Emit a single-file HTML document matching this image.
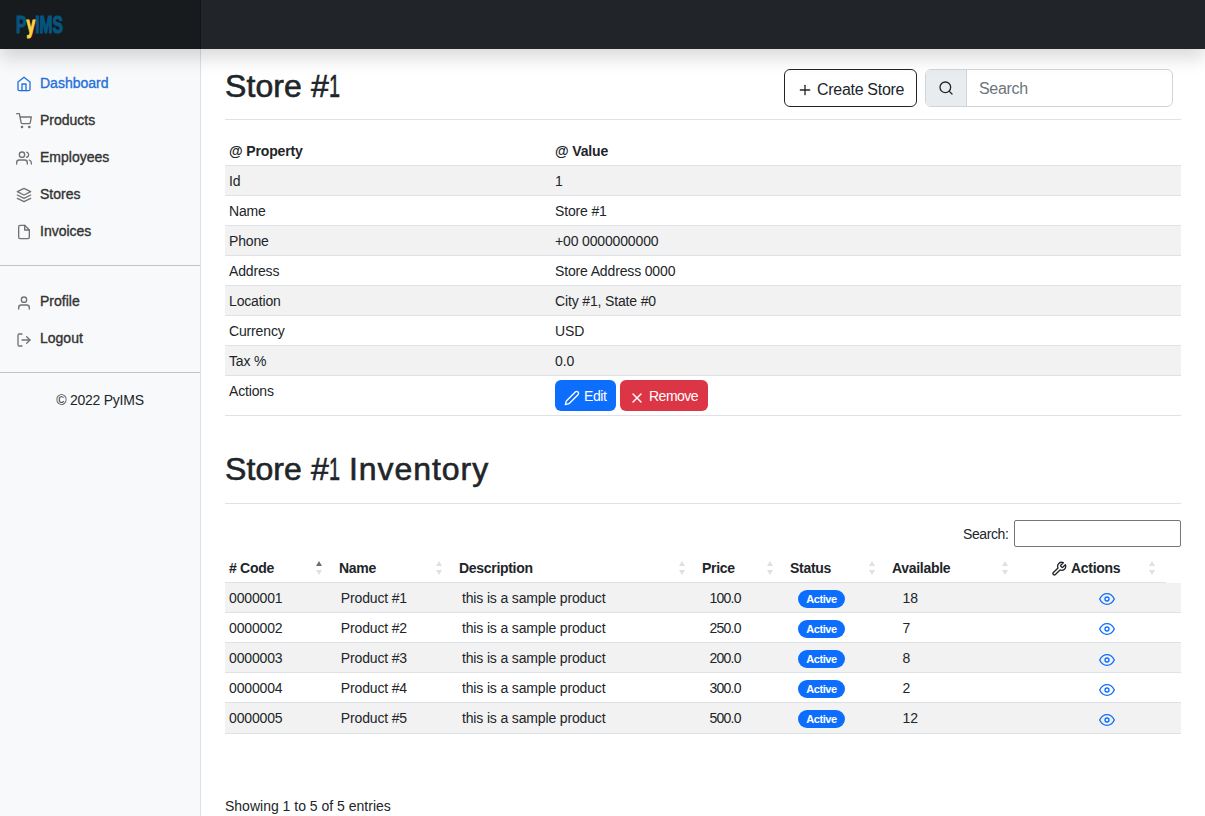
<!DOCTYPE html>
<html>
<head>
<meta charset="utf-8">
<style>
*{box-sizing:border-box;}
html,body{margin:0;padding:0;}
body{width:1205px;height:816px;overflow:hidden;position:relative;background:#fff;color:#212529;font-family:"Liberation Sans",sans-serif;font-size:14px;line-height:21px;}
.abs{position:absolute;white-space:nowrap;}
svg.fi{position:absolute;width:16px;height:16px;fill:none;stroke:currentColor;stroke-width:2;stroke-linecap:round;stroke-linejoin:round;}
#nav{position:absolute;left:0;top:0;width:1205px;height:49px;background:#212529;box-shadow:0 9px 18px rgba(0,0,0,.15);z-index:20;}
#brand{position:absolute;left:0;top:0;width:200.83px;height:49px;background:rgba(0,0,0,.25);box-shadow:inset -1px 0 0 rgba(0,0,0,.25);}
#logo{position:absolute;left:16px;top:10.7px;font-weight:bold;font-size:23.5px;line-height:28px;color:#04557f;transform-origin:0 0;transform:scaleX(0.665);white-space:nowrap;letter-spacing:0px;-webkit-text-stroke:1.2px #04557f;}
#logo .y{color:#ffd140;-webkit-text-stroke:1.2px #ffd140;}
#side{position:absolute;left:0;top:48px;width:200.83px;height:768px;background:#f8f9fa;box-shadow:inset -1px 0 0 rgba(0,0,0,.1);z-index:10;}
#sidec{position:absolute;left:0;top:0;z-index:11;}
.nl{position:absolute;left:40px;height:21px;color:#333;white-space:nowrap;-webkit-text-stroke:0.35px #333;}
.nl.active{color:#2470dc;-webkit-text-stroke:0.35px #2470dc;}
.ic{color:#727272;}
.ic.active{color:#2470dc;}
.shr{position:absolute;left:0;width:200px;height:1px;background:#c2c3c5;}
.h2{position:absolute;left:225px;font-size:32px;line-height:38px;white-space:nowrap;-webkit-text-stroke:0.6px #212529;}
.one{display:inline-block;transform:scaleX(0.62);transform-origin:0 50%;margin-right:-6.8px;}
.hr{position:absolute;left:225px;width:956px;height:1px;background:#dee2e6;}
.btn-out{position:absolute;left:784px;top:69px;width:133px;height:38px;border:1px solid #212529;border-radius:6px;background:#fff;}
.ig{position:absolute;left:925px;top:69px;width:248px;height:38px;border:1px solid #ced4da;border-radius:6px;background:#fff;overflow:hidden;}
.ig .addon{position:absolute;left:0;top:0;width:41px;height:36px;background:#e9ecef;border-right:1px solid #ced4da;}
table{border-collapse:collapse;border-spacing:0;position:absolute;left:225px;table-layout:fixed;}
td,th{padding:5px 4px 3px 4px;border-bottom:1px solid #dee2e6;text-align:left;vertical-align:top;white-space:nowrap;height:29px;letter-spacing:-0.15px;}
th{font-weight:bold;}
tr.s td{background:#f2f2f2;}
#lastr td{height:31px;}
.btn-sm{display:block;height:31px;border-radius:6px;color:#fff;}
.badge{display:inline-block;height:18px;border-radius:9px;background:#0d6efd;color:#fff;font-weight:bold;font-size:11px;line-height:18px;text-align:center;letter-spacing:-0.4px;}
</style>
</head>
<body>
<div id="nav"><div id="brand"><div id="logo">P<span class="y">y</span>IMS</div></div></div>
<div id="side"></div>
<div id="sidec"><svg class="fi ic active" viewBox="0 0 24 24" style="left:16px;top:76px;"><path d="M3 9l9-7 9 7v11a2 2 0 0 1-2 2H5a2 2 0 0 1-2-2z"/><polyline points="9 22 9 12 15 12 15 22"/></svg><div class="nl active" style="top:72.5px">Dashboard</div><svg class="fi ic" viewBox="0 0 24 24" style="left:16px;top:113px;"><circle cx="9" cy="21" r="1"/><circle cx="20" cy="21" r="1"/><path d="M1 1h4l2.68 13.39a2 2 0 0 0 2 1.61h9.72a2 2 0 0 0 2-1.61L23 6H6"/></svg><div class="nl" style="top:109.5px">Products</div><svg class="fi ic" viewBox="0 0 24 24" style="left:16px;top:150px;"><path d="M17 21v-2a4 4 0 0 0-4-4H5a4 4 0 0 0-4 4v2"/><circle cx="9" cy="7" r="4"/><path d="M23 21v-2a4 4 0 0 0-3-3.87"/><path d="M16 3.13a4 4 0 0 1 0 7.75"/></svg><div class="nl" style="top:146.5px">Employees</div><svg class="fi ic" viewBox="0 0 24 24" style="left:16px;top:187px;"><polygon points="12 2 2 7 12 12 22 7 12 2"/><polyline points="2 17 12 22 22 17"/><polyline points="2 12 12 17 22 12"/></svg><div class="nl" style="top:183.5px">Stores</div><svg class="fi ic" viewBox="0 0 24 24" style="left:16px;top:224px;"><path d="M13 2H6a2 2 0 0 0-2 2v16a2 2 0 0 0 2 2h12a2 2 0 0 0 2-2V9z"/><polyline points="13 2 13 9 20 9"/></svg><div class="nl" style="top:220.5px">Invoices</div><div class="shr" style="top:265px"></div><svg class="fi ic" viewBox="0 0 24 24" style="left:16px;top:295px;"><path d="M20 21v-2a4 4 0 0 0-4-4H8a4 4 0 0 0-4 4v2"/><circle cx="12" cy="7" r="4"/></svg><div class="nl" style="top:291px">Profile</div><svg class="fi ic" viewBox="0 0 24 24" style="left:16px;top:332px;"><path d="M9 21H5a2 2 0 0 1-2-2V5a2 2 0 0 1 2-2h4"/><polyline points="16 17 21 12 16 7"/><line x1="21" y1="12" x2="9" y2="12"/></svg><div class="nl" style="top:328px">Logout</div><div class="shr" style="top:372px"></div><div class="abs" style="left:0;top:389.5px;width:200px;text-align:center;letter-spacing:-0.25px">© 2022 PyIMS</div></div>
<div id="mainc"><div class="h2" style="top:67px;letter-spacing:0.1px">Store #<span class="one">1</span></div><div class="btn-out"></div><svg class="fi " viewBox="0 0 24 24" style="left:797px;top:82px;color:#212529;"><line x1="12" y1="5" x2="12" y2="19"/><line x1="5" y1="12" x2="19" y2="12"/></svg><div class="abs" style="left:817px;top:77.5px;font-size:16px;line-height:24px;letter-spacing:-0.3px">Create Store</div><div class="ig"><div class="addon"></div></div><svg class="fi " viewBox="0 0 24 24" style="left:938px;top:80px;color:#212529;"><circle cx="11" cy="11" r="8"/><line x1="21" y1="21" x2="16.65" y2="16.65"/></svg><div class="abs" style="left:979px;top:77px;font-size:16px;line-height:24px;color:#6c757d;letter-spacing:-0.3px">Search</div><div class="hr" style="top:119px"></div><table style="top:136px;width:956px"><colgroup><col style="width:326px"><col style="width:630px"></colgroup><tr><th>@ Property</th><th>@ Value</th></tr><tr class="s"><td>Id</td><td>1</td></tr><tr class=""><td>Name</td><td>Store #1</td></tr><tr class="s"><td>Phone</td><td>+00 0000000000</td></tr><tr class=""><td>Address</td><td>Store Address 0000</td></tr><tr class="s"><td>Location</td><td>City #1, State #0</td></tr><tr class=""><td>Currency</td><td>USD</td></tr><tr class="s"><td>Tax %</td><td>0.0</td></tr><tr><td style="height:40px">Actions</td><td style="height:40px"></td></tr></table><div class="btn-sm abs" style="left:555px;top:380px;width:61px;background:#0d6efd"></div><svg class="fi " viewBox="0 0 24 24" style="left:564px;top:390px;color:#fff;"><path d="M17 3a2.828 2.828 0 1 1 4 4L7.5 20.5 2 22l1.5-5.5L17 3z"/></svg><div class="abs" style="left:584px;top:385.5px;color:#fff;letter-spacing:-0.4px">Edit</div><div class="btn-sm abs" style="left:620px;top:380px;width:88px;background:#dc3545"></div><svg class="fi " viewBox="0 0 24 24" style="left:629px;top:390px;color:#fff;"><line x1="18" y1="6" x2="6" y2="18"/><line x1="6" y1="6" x2="18" y2="18"/></svg><div class="abs" style="left:649px;top:385.5px;color:#fff;letter-spacing:-0.5px">Remove</div><div class="h2" style="top:450px;letter-spacing:0.1px">Store #<span class="one">1</span> <span style="letter-spacing:0.95px">Inventory</span></div><div class="hr" style="top:503px"></div><div class="abs" style="left:963px;top:524px;letter-spacing:-0.4px">Search:</div><div class="abs" style="left:1014px;top:520px;width:167px;height:27px;border:1px solid #767676;border-radius:2px"></div><table style="top:553px;width:941px"><colgroup><col style="width:110px"><col style="width:120px"><col style="width:243px"><col style="width:88px"><col style="width:102px"><col style="width:132px"><col style="width:146px"></colgroup><tr><th style="letter-spacing:-0.3px"># Code</th><th style="letter-spacing:-0.3px">Name</th><th style="letter-spacing:-0.3px">Description</th><th style="letter-spacing:-0.3px">Price</th><th style="letter-spacing:-0.3px">Status</th><th style="letter-spacing:-0.3px">Available</th><th style="letter-spacing:-0.3px"></th></tr></table><svg class="fi " viewBox="0 0 24 24" style="left:1051px;top:561px;color:#212529;"><path d="M14.7 6.3a1 1 0 0 0 0 1.4l1.6 1.6a1 1 0 0 0 1.4 0l3.77-3.77a6 6 0 0 1-7.94 7.94l-6.91 6.91a2.12 2.12 0 0 1-3-3l6.91-6.91a6 6 0 0 1 7.94-7.94l-3.76 3.76z"/></svg><div class="abs" style="left:1071px;top:557.5px;font-weight:bold;letter-spacing:-0.3px">Actions</div><svg class="abs" style="left:316px;top:561px" width="6" height="5" viewBox="0 0 6 5"><polygon points="3 0 6 5 0 5" fill="#6d6d6d"/></svg><svg class="abs" style="left:316px;top:570px" width="6" height="5" viewBox="0 0 6 5"><polygon points="0 0 6 0 3 5" fill="#e0e0e0"/></svg><svg class="abs" style="left:436px;top:561px" width="6" height="5" viewBox="0 0 6 5"><polygon points="3 0 6 5 0 5" fill="#e0e0e0"/></svg><svg class="abs" style="left:436px;top:570px" width="6" height="5" viewBox="0 0 6 5"><polygon points="0 0 6 0 3 5" fill="#e0e0e0"/></svg><svg class="abs" style="left:679px;top:561px" width="6" height="5" viewBox="0 0 6 5"><polygon points="3 0 6 5 0 5" fill="#e0e0e0"/></svg><svg class="abs" style="left:679px;top:570px" width="6" height="5" viewBox="0 0 6 5"><polygon points="0 0 6 0 3 5" fill="#e0e0e0"/></svg><svg class="abs" style="left:767px;top:561px" width="6" height="5" viewBox="0 0 6 5"><polygon points="3 0 6 5 0 5" fill="#e0e0e0"/></svg><svg class="abs" style="left:767px;top:570px" width="6" height="5" viewBox="0 0 6 5"><polygon points="0 0 6 0 3 5" fill="#e0e0e0"/></svg><svg class="abs" style="left:869px;top:561px" width="6" height="5" viewBox="0 0 6 5"><polygon points="3 0 6 5 0 5" fill="#e0e0e0"/></svg><svg class="abs" style="left:869px;top:570px" width="6" height="5" viewBox="0 0 6 5"><polygon points="0 0 6 0 3 5" fill="#e0e0e0"/></svg><svg class="abs" style="left:1002px;top:561px" width="6" height="5" viewBox="0 0 6 5"><polygon points="3 0 6 5 0 5" fill="#e0e0e0"/></svg><svg class="abs" style="left:1002px;top:570px" width="6" height="5" viewBox="0 0 6 5"><polygon points="0 0 6 0 3 5" fill="#e0e0e0"/></svg><svg class="abs" style="left:1148.5px;top:561px" width="6" height="5" viewBox="0 0 6 5"><polygon points="3 0 6 5 0 5" fill="#e0e0e0"/></svg><svg class="abs" style="left:1148.5px;top:570px" width="6" height="5" viewBox="0 0 6 5"><polygon points="0 0 6 0 3 5" fill="#e0e0e0"/></svg><table style="top:583px;width:956px"><colgroup><col style="width:111.8px"><col style="width:121.2px"><col style="width:247.6px"><col style="width:89.4px"><col style="width:103.6px"><col style="width:134.1px"><col style="width:148.3px"></colgroup><tr class="s"><td>0000001</td><td>Product #1</td><td>this is a sample product</td><td style="letter-spacing:-0.8px">100.0</td><td><span class="badge" style="width:47px;vertical-align:top;position:relative;top:2px;margin-left:-1px">Active</span></td><td>18</td><td></td></tr><tr class=""><td>0000002</td><td>Product #2</td><td>this is a sample product</td><td style="letter-spacing:-0.8px">250.0</td><td><span class="badge" style="width:47px;vertical-align:top;position:relative;top:2px;margin-left:-1px">Active</span></td><td>7</td><td></td></tr><tr class="s"><td>0000003</td><td>Product #3</td><td>this is a sample product</td><td style="letter-spacing:-0.8px">200.0</td><td><span class="badge" style="width:47px;vertical-align:top;position:relative;top:2px;margin-left:-1px">Active</span></td><td>8</td><td></td></tr><tr class=""><td>0000004</td><td>Product #4</td><td>this is a sample product</td><td style="letter-spacing:-0.8px">300.0</td><td><span class="badge" style="width:47px;vertical-align:top;position:relative;top:2px;margin-left:-1px">Active</span></td><td>2</td><td></td></tr><tr class="s" id='lastr'><td>0000005</td><td>Product #5</td><td>this is a sample product</td><td style="letter-spacing:-0.8px">500.0</td><td><span class="badge" style="width:47px;vertical-align:top;position:relative;top:2px;margin-left:-1px">Active</span></td><td>12</td><td></td></tr></table><svg class="fi " viewBox="0 0 24 24" style="left:1099px;top:591px;color:#0d6efd;"><path d="M1 12s4-8 11-8 11 8 11 8-4 8-11 8-11-8-11-8z"/><circle cx="12" cy="12" r="3"/></svg><svg class="fi " viewBox="0 0 24 24" style="left:1099px;top:621px;color:#0d6efd;"><path d="M1 12s4-8 11-8 11 8 11 8-4 8-11 8-11-8-11-8z"/><circle cx="12" cy="12" r="3"/></svg><svg class="fi " viewBox="0 0 24 24" style="left:1099px;top:652px;color:#0d6efd;"><path d="M1 12s4-8 11-8 11 8 11 8-4 8-11 8-11-8-11-8z"/><circle cx="12" cy="12" r="3"/></svg><svg class="fi " viewBox="0 0 24 24" style="left:1099px;top:682px;color:#0d6efd;"><path d="M1 12s4-8 11-8 11 8 11 8-4 8-11 8-11-8-11-8z"/><circle cx="12" cy="12" r="3"/></svg><svg class="fi " viewBox="0 0 24 24" style="left:1099px;top:712px;color:#0d6efd;"><path d="M1 12s4-8 11-8 11 8 11 8-4 8-11 8-11-8-11-8z"/><circle cx="12" cy="12" r="3"/></svg><div class="abs" style="left:225px;top:796px;">Showing 1 to 5 of 5 entries</div></div>
</body>
</html>
